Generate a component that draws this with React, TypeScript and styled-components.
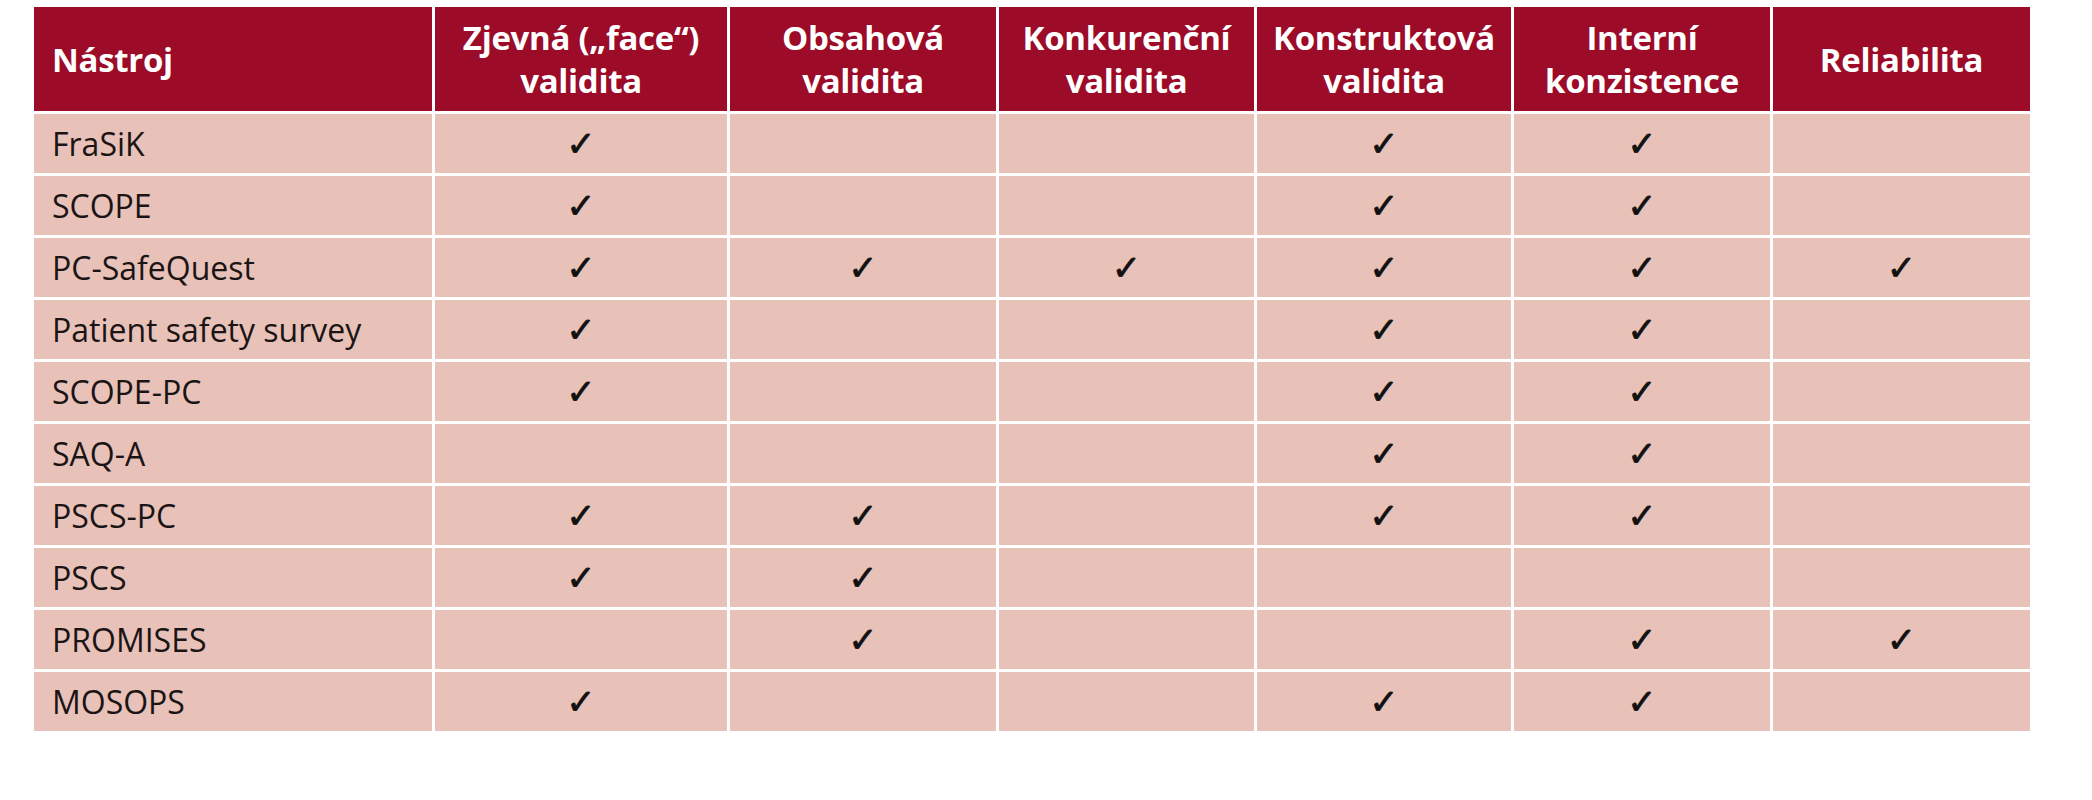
import styled, { createGlobalStyle } from "styled-components";

const GlobalStyle = createGlobalStyle`
  html, body {
    margin: 0;
    padding: 0;
    background: #ffffff;
  }
`;

const Page = styled.div`
  padding: 7px 0 0 34px;
  font-family: "Open Sans", "Noto Sans", sans-serif;
`;

const Table = styled.table`
  border-collapse: separate;
  border-spacing: 0;
  table-layout: fixed;
  width: 1996px;
`;

const HeadCell = styled.th<{ $left?: boolean }>`
  height: 104px;
  padding: 0 ${(p) => (p.$left ? "18px" : "6px")};
  background: #9c0b27;
  color: #ffffff;
  font-weight: 700;
  font-size: 33px;
  line-height: 43px;
  letter-spacing: -0.3px;
  text-align: ${(p) => (p.$left ? "left" : "center")};
  vertical-align: middle;

  & + & {
    border-left: 3px solid #ffffff;
  }
`;

const BodyCell = styled.td<{ $left?: boolean }>`
  height: 59px;
  padding: 0 ${(p) => (p.$left ? "18px" : "8px")};
  background: #e8c2b9;
  color: #1b1414;
  font-size: 32px;
  border-top: 3px solid #ffffff;
  text-align: ${(p) => (p.$left ? "left" : "center")};
  vertical-align: middle;
  white-space: nowrap;

  & + & {
    border-left: 3px solid #ffffff;
  }
`;

const Check = styled.span`
  font-family: "DejaVu Sans", sans-serif;
  font-size: 35px;
  line-height: 1;
  color: #111111;
  -webkit-text-stroke: 0.8px #111111;
`;

const columns = [
  { width: 398, label: ["Nástroj"] },
  { width: 295, label: ["Zjevná („face“)", "validita"] },
  { width: 269, label: ["Obsahová", "validita"] },
  { width: 258, label: ["Konkurenční", "validita"] },
  { width: 257, label: ["Konstruktová", "validita"] },
  { width: 259, label: ["Interní", "konzistence"] },
  { width: 260, label: ["Reliabilita"] },
];

// 1 = check mark, 0 = empty
const rows: [string, number[]][] = [
  ["FraSiK", [1, 0, 0, 1, 1, 0]],
  ["SCOPE", [1, 0, 0, 1, 1, 0]],
  ["PC-SafeQuest", [1, 1, 1, 1, 1, 1]],
  ["Patient safety survey", [1, 0, 0, 1, 1, 0]],
  ["SCOPE-PC", [1, 0, 0, 1, 1, 0]],
  ["SAQ-A", [0, 0, 0, 1, 1, 0]],
  ["PSCS-PC", [1, 1, 0, 1, 1, 0]],
  ["PSCS", [1, 1, 0, 0, 0, 0]],
  ["PROMISES", [0, 1, 0, 0, 1, 1]],
  ["MOSOPS", [1, 0, 0, 1, 1, 0]],
];

export default function App() {
  return (
    <>
      <GlobalStyle />
      <Page>
        <Table>
          <colgroup>
            {columns.map((c, i) => (
              <col key={i} style={{ width: c.width }} />
            ))}
          </colgroup>
          <thead>
            <tr>
              {columns.map((c, i) => (
                <HeadCell key={i} $left={i === 0}>
                  {c.label.map((line, j) => (
                    <div key={j}>{line}</div>
                  ))}
                </HeadCell>
              ))}
            </tr>
          </thead>
          <tbody>
            {rows.map(([name, marks]) => (
              <tr key={name}>
                <BodyCell $left>{name}</BodyCell>
                {marks.map((m, i) => (
                  <BodyCell key={i}>{m ? <Check>✓</Check> : null}</BodyCell>
                ))}
              </tr>
            ))}
          </tbody>
        </Table>
      </Page>
    </>
  );
}
